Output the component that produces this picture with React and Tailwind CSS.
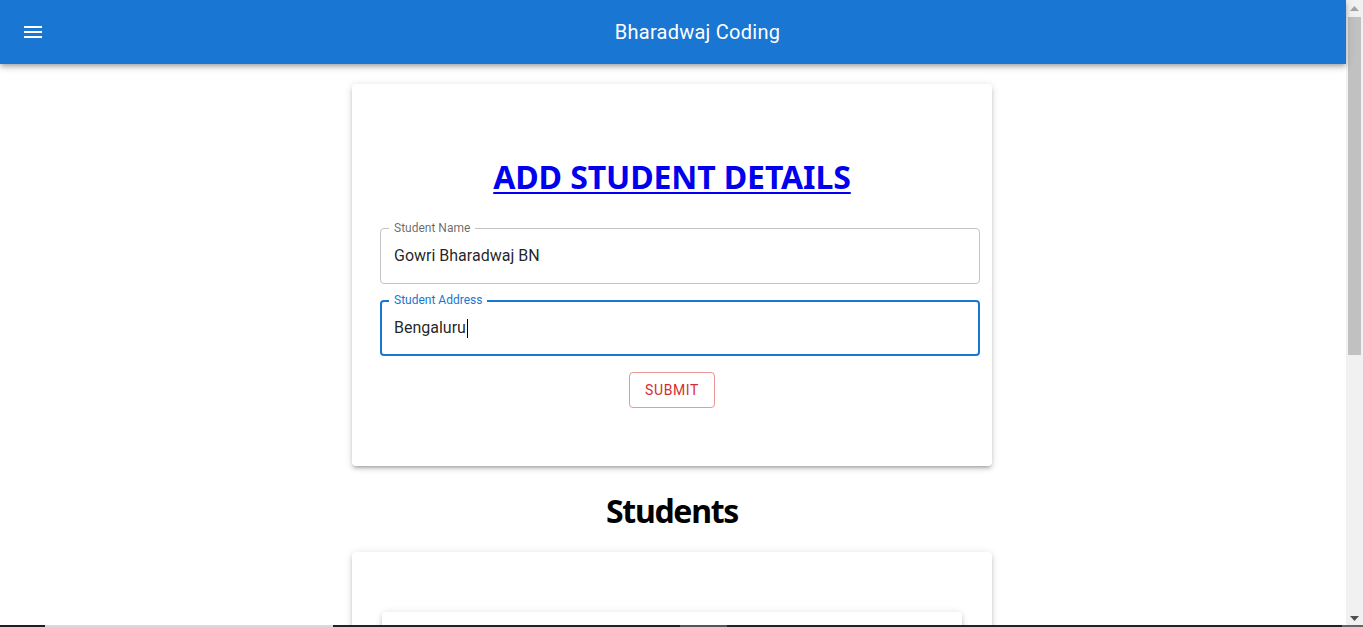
import React from "react";

const elev3 =
  "shadow-[0_3px_3px_-2px_rgba(0,0,0,0.2),0_3px_4px_0_rgba(0,0,0,0.14),0_1px_8px_0_rgba(0,0,0,0.12)]";

function Field({ label, value, focused, caret }) {
  return (
    <div
      className={
        "relative h-[56px] w-[600px] rounded-[4px] " +
        (focused ? "border-2 border-[#1976d2]" : "border border-[#c4c4c4]")
      }
    >
      <span
        className={
          "absolute bg-white px-[5px] text-[12px] leading-[16px] " +
          (focused ? "left-[7px] top-[-10px] text-[#1976d2]" : "left-[8px] top-[-9px] text-[rgba(0,0,0,0.6)]")
        }
      >
        {label}
      </span>
      <div
        className={
          "flex h-full items-center text-[16px] text-[rgba(0,0,0,0.87)] " +
          (focused ? "pl-[12px]" : "pl-[13px]")
        }
      >
        <span>{value}</span>
        {caret && <span className="ml-[1px] inline-block h-[19px] w-[1px] bg-black" />}
      </div>
    </div>
  );
}

export default function App() {
  return (
    <div
      className="relative flex h-[627px] w-full overflow-hidden bg-white"
      style={{ fontFamily: "Roboto, 'Liberation Sans', sans-serif" }}
    >
      <div className="flex min-w-0 flex-1 flex-col">
        <header className="relative z-10 flex h-[64px] shrink-0 items-center bg-[#1976d2] pl-[21px] pr-[24px] text-white shadow-[0_2px_4px_-1px_rgba(0,0,0,0.2),0_4px_5px_0_rgba(0,0,0,0.14),0_1px_10px_0_rgba(0,0,0,0.12)]">
          <div className="mr-[28px] flex h-[48px] w-[24px] items-center justify-center">
            <svg width="24" height="24" viewBox="0 0 24 24" fill="white">
              <path d="M3 18h18v-2H3v2zm0-5h18v-2H3v2zm0-7v2h18V6H3z" />
            </svg>
          </div>
          <div className="flex-1 text-center text-[20px] font-normal leading-[32px] tracking-[0.25px]">
            Bharadwaj Coding
          </div>
        </header>

        <main className="flex flex-col items-center pr-[2px] pt-[20px]">
          <div className={"flex w-[640px] flex-col items-center rounded-[4px] bg-white pb-[58px] pt-[73px] " + elev3}>
            <h1
              className="text-[32px] font-bold leading-[40px] tracking-[-0.1px] text-[#0000ee] underline decoration-2 underline-offset-[3px]"
              style={{ fontFamily: "'Noto Sans', 'Open Sans', sans-serif" }}
            >
              ADD STUDENT DETAILS
            </h1>
            <div className="mt-[31px] flex w-full flex-col gap-[16px] pl-[28px] pr-[12px]">
              <Field label="Student Name" value="Gowri Bharadwaj BN" />
              <Field label="Student Address" value="Bengaluru" focused caret />
            </div>
            <button className="mt-[16px] h-[36px] rounded-[4px] border border-[rgba(211,47,47,0.5)] px-[15px] text-[14px] font-normal uppercase tracking-[0.6px] text-[#d32f2f]">
              Submit
            </button>
          </div>

          <h1
            className="mt-[25px] text-[32px] font-bold leading-[40px] tracking-[-1.3px] text-black"
            style={{ fontFamily: "'Noto Sans', 'Open Sans', sans-serif" }}
          >
            Students
          </h1>

          <div className={"mt-[21px] flex w-[640px] flex-col items-center rounded-[4px] bg-white px-[30px] pt-[60px] " + elev3}>
            <div className={"h-[100px] w-full rounded-[4px] bg-white " + elev3} />
          </div>
        </main>
      </div>

      <div className="flex w-[17px] shrink-0 flex-col items-center bg-[#f1f1f1]">
        <div className="flex h-[17px] w-full items-center justify-center">
          <svg width="9" height="5" viewBox="0 0 9 5">
            <path d="M0 5 L4.5 0 L9 5 Z" fill="#a3a3a3" />
          </svg>
        </div>
        <div className="h-[338px] w-[13px] bg-[#c1c1c1]" />
        <div className="flex-1" />
        <div className="flex h-[17px] w-full items-center justify-center">
          <svg width="9" height="5" viewBox="0 0 9 5">
            <path d="M0 0 L9 0 L4.5 5 Z" fill="#505050" />
          </svg>
        </div>
      </div>

      <div className="absolute bottom-0 left-0 flex h-[2px] w-full">
        <div className="w-[45px] bg-[#1f1f1f]" />
        <div className="w-[288px] bg-[#d9d9d9]" />
        <div className="w-[347px] bg-[#222]" />
        <div className="w-[47px] bg-[#555]" />
        <div className="flex-1 bg-[#222]" />
        <div className="w-[21px] bg-[#666]" />
      </div>
    </div>
  );
}
